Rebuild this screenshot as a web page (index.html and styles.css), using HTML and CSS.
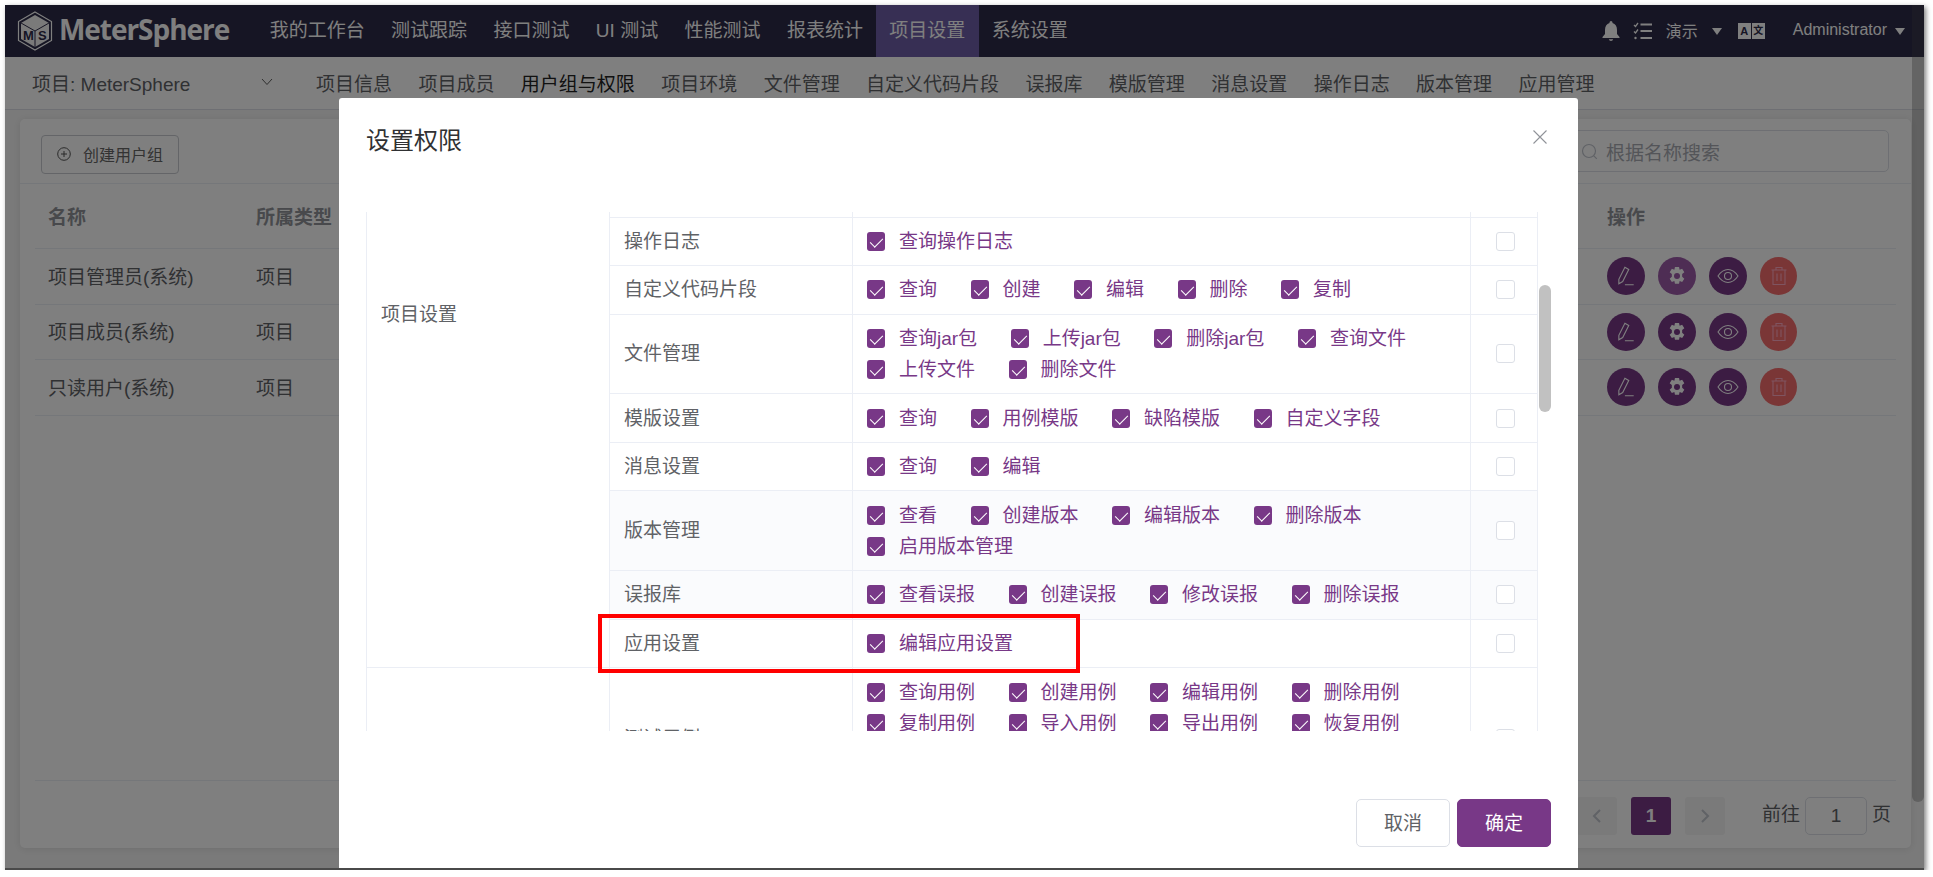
FILE: index.html
```html
<!DOCTYPE html>
<html lang="zh-CN">
<head>
  <meta charset="UTF-8">
  <title>MeterSphere 设置权限</title>
  <link rel="stylesheet" href="styles.css">
</head>
<body>

<div class="window">
  <header class="topbar">
    <div class="logo">
      <svg class="logo-mark" width="36" height="40" viewBox="0 0 36 40">
        <path d="M18 1 34.5 10.5V29.5L18 39 1.500 29.500V10.500Z" fill="none" stroke="#fff" stroke-width="1.200"/>
        <path d="M18 4 32 12V28L18 36 4 28V12Z" fill="#f4f4f4"/>
        <path d="M4 12 18 20 32 12M18 20V36" fill="none" stroke="#2c2a48" stroke-width="1"/>
        <text x="6" y="29" class="logo-ms">M</text>
        <text x="21" y="29" class="logo-ms">S</text>
      </svg>
      <span class="logo-name">MeterSphere</span>
    </div>
    <nav class="topnav">
      <a>我的工作台</a>
      <a>测试跟踪</a>
      <a>接口测试</a>
      <a>UI 测试</a>
      <a>性能测试</a>
      <a>报表统计</a>
      <a class="active">项目设置</a>
      <a>系统设置</a>
    </nav>
    <div class="topright">
      <svg class="bell" width="18" height="22" viewBox="0 0 18 22"><path d="M9 1a1.500 1.500 0 0 1 1.500 1.500v.6C13.500 4 15 6.500 15 10v4l2.500 3v1H.5v-1L3 14v-4c0-3.500 1.500-6 4.500-6.900v-.6A1.500 1.500 0 0 1 9 1ZM6.800 19.300h4.400A2.300 2.300 0 0 1 9 21a2.300 2.300 0 0 1-2.200-1.700Z" fill="#fff"/></svg>
      <svg class="tasks" width="20" height="20" viewBox="0 0 20 20" fill="none" stroke="#fff" stroke-width="2"><path d="M1 4 2.500 5.500 5 2" stroke-width="1.300"/><path d="M1 10.500 2.500 12 5 8.500" stroke-width="1.300"/><circle cx="2.500" cy="17" r="1.200" fill="#fff" stroke="none"/><path d="M7.500 3.500H19M7.500 10H19M7.500 17H19"/></svg>
      <span class="demo">演示</span>
      <i class="caret caret-demo"></i>
      <span class="lang"><b>A</b><b class="lang-zh">文</b></span>
      <span class="admin">Administrator</span>
      <i class="caret"></i>
    </div>
  </header>

  <div class="subbar">
    <div class="project">
      <span>项目: MeterSphere</span>
      <svg width="12" height="8" viewBox="0 0 12 8" fill="none" stroke="#5e5e5e" stroke-width="1"><path d="M1 1 6 6.500 11 1"/></svg>
    </div>
    <nav class="subnav">
      <a>项目信息</a>
      <a>项目成员</a>
      <a class="active">用户组与权限</a>
      <a>项目环境</a>
      <a>文件管理</a>
      <a>自定义代码片段</a>
      <a>误报库</a>
      <a>模版管理</a>
      <a>消息设置</a>
      <a>操作日志</a>
      <a>版本管理</a>
      <a>应用管理</a>
    </nav>
  </div>

  <main class="main">
    <section class="card">
      <div class="toolbar">
        <button class="add-btn">
          <svg width="14" height="14" viewBox="0 0 14 14" fill="none" stroke="#555" stroke-width="1"><circle cx="7" cy="7" r="6.300"/><path d="M4 7h6M7 4v6"/></svg>
          创建用户组
        </button>
        <div class="search">
          <svg width="17" height="17" viewBox="0 0 17 17" fill="none" stroke="#c0c4cc" stroke-width="1.200"><circle cx="8" cy="8" r="6.500"/><path d="m12.800 12.800 3 3"/></svg>
          <span>根据名称搜索</span>
        </div>
      </div>
      <div class="grid-table">
        <div class="grid-row grid-head"><span>名称</span><span>所属类型</span><span></span><span>操作</span></div>
        <div class="grid-row">
          <span>项目管理员(系统)</span><span>项目</span><span></span>
          <div class="actions">
            <button class="round"><svg width="22" height="22" viewBox="0 0 20 20" fill="none" stroke="#fff" stroke-width="1"><path d="M9 2 12.500 4 7 15 3.500 17 3.500 13ZM9 18H17"/></svg></button>
            <button class="round faded"><svg width="24" height="24" viewBox="0 0 20 20"><path d="M8.300 2h3.400l.5 2.300 2.100-.9 1.800 2.900-1.800 1.500v2.400l1.800 1.500-1.800 2.900-2.100-.9-.5 2.300H8.300l-.5-2.300-2.100.9-1.800-2.900 1.800-1.500V7.800L3.900 6.300l1.800-2.900 2.100.9Z" fill="#fff" transform="translate(0 .5)"/><circle cx="10" cy="10" r="2.500" fill="#9c5aa8"/></svg></button>
            <button class="round"><svg width="22" height="16" viewBox="0 0 22 16" fill="none" stroke="#fff" stroke-width="1.100"><path d="M1 8C4 3.500 7.500 1.500 11 1.500S18 3.500 21 8c-3 4.500-6.500 6.500-10 6.500S4 12.500 1 8Z"/><circle cx="11" cy="8" r="3.500"/></svg></button>
            <button class="round danger"><svg width="18" height="20" viewBox="0 0 18 20" fill="none" stroke="#ffa8c0" stroke-width="1.100"><path d="M1.500 4h15M6 4V1.500h6V4M3 4v14.500h12V4M7 7.500v7.500M11 7.500v7.500"/></svg></button>
          </div>
        </div>
        <div class="grid-row">
          <span>项目成员(系统)</span><span>项目</span><span></span>
          <div class="actions">
            <button class="round"><svg width="22" height="22" viewBox="0 0 20 20" fill="none" stroke="#fff" stroke-width="1"><path d="M9 2 12.500 4 7 15 3.500 17 3.500 13ZM9 18H17"/></svg></button>
            <button class="round"><svg width="24" height="24" viewBox="0 0 20 20"><path d="M8.300 2h3.400l.5 2.300 2.100-.9 1.800 2.900-1.800 1.500v2.400l1.800 1.500-1.800 2.900-2.100-.9-.5 2.300H8.300l-.5-2.300-2.100.9-1.800-2.900 1.800-1.500V7.800L3.900 6.300l1.800-2.900 2.100.9Z" fill="#fff" transform="translate(0 .5)"/><circle cx="10" cy="10" r="2.500" fill="#783887"/></svg></button>
            <button class="round"><svg width="22" height="16" viewBox="0 0 22 16" fill="none" stroke="#fff" stroke-width="1.100"><path d="M1 8C4 3.500 7.500 1.500 11 1.500S18 3.500 21 8c-3 4.500-6.500 6.500-10 6.500S4 12.500 1 8Z"/><circle cx="11" cy="8" r="3.500"/></svg></button>
            <button class="round danger"><svg width="18" height="20" viewBox="0 0 18 20" fill="none" stroke="#ffa8c0" stroke-width="1.100"><path d="M1.500 4h15M6 4V1.500h6V4M3 4v14.500h12V4M7 7.500v7.500M11 7.500v7.500"/></svg></button>
          </div>
        </div>
        <div class="grid-row">
          <span>只读用户(系统)</span><span>项目</span><span></span>
          <div class="actions">
            <button class="round"><svg width="22" height="22" viewBox="0 0 20 20" fill="none" stroke="#fff" stroke-width="1"><path d="M9 2 12.500 4 7 15 3.500 17 3.500 13ZM9 18H17"/></svg></button>
            <button class="round"><svg width="24" height="24" viewBox="0 0 20 20"><path d="M8.300 2h3.400l.5 2.300 2.100-.9 1.800 2.900-1.800 1.500v2.400l1.800 1.500-1.800 2.900-2.100-.9-.5 2.300H8.300l-.5-2.300-2.100.9-1.800-2.900 1.800-1.500V7.800L3.900 6.300l1.800-2.900 2.100.9Z" fill="#fff" transform="translate(0 .5)"/><circle cx="10" cy="10" r="2.500" fill="#783887"/></svg></button>
            <button class="round"><svg width="22" height="16" viewBox="0 0 22 16" fill="none" stroke="#fff" stroke-width="1.100"><path d="M1 8C4 3.500 7.500 1.500 11 1.500S18 3.500 21 8c-3 4.500-6.500 6.500-10 6.500S4 12.500 1 8Z"/><circle cx="11" cy="8" r="3.500"/></svg></button>
            <button class="round danger"><svg width="18" height="20" viewBox="0 0 18 20" fill="none" stroke="#ffa8c0" stroke-width="1.100"><path d="M1.500 4h15M6 4V1.500h6V4M3 4v14.500h12V4M7 7.500v7.500M11 7.500v7.500"/></svg></button>
          </div>
        </div>
      </div>
      <div class="pager">
        <span class="page-btn"><svg width="10" height="16" viewBox="0 0 10 16" fill="none" stroke="#c0c4cc" stroke-width="2"><path d="M8 2 2 8l6 6"/></svg></span>
        <span class="page-btn page-on">1</span>
        <span class="page-btn"><svg width="10" height="16" viewBox="0 0 10 16" fill="none" stroke="#c0c4cc" stroke-width="2"><path d="m2 2 6 6-6 6"/></svg></span>
        <span class="goto">前往</span>
        <span class="goto-input">1</span>
        <span>页</span>
      </div>
    </section>
  </main>

  <div class="overlay"></div>
  <div class="window-thumb"></div>

  <div class="dialog">
    <div class="dialog-head">
      <h2>设置权限</h2>
      <svg class="close" width="14" height="14" viewBox="0 0 14 14" fill="none" stroke="#909399" stroke-width="1.100"><path d="M.5.5l13 13M13.500.5l-13 13"/></svg>
    </div>
    <div class="perm-scroll">
      <table class="perm">
        <colgroup><col class="c1"><col class="c2"><col class="c3"><col class="c4"></colgroup>
        <tr class="sliver">
          <td class="group" rowspan="9">项目设置</td><td></td><td></td><td></td>
        </tr>
        <tr>
          <td>操作日志</td>
          <td><div class="checks"><label><i class="cb"></i>查询操作日志</label></div></td>
          <td><i class="cb off"></i></td>
        </tr>
        <tr>
          <td>自定义代码片段</td>
          <td><div class="checks"><label><i class="cb"></i>查询</label><label><i class="cb"></i>创建</label><label><i class="cb"></i>编辑</label><label><i class="cb"></i>删除</label><label><i class="cb"></i>复制</label></div></td>
          <td><i class="cb off"></i></td>
        </tr>
        <tr>
          <td>文件管理</td>
          <td><div class="checks"><label><i class="cb"></i>查询jar包</label><label><i class="cb"></i>上传jar包</label><label><i class="cb"></i>删除jar包</label><label><i class="cb"></i>查询文件</label><label><i class="cb"></i>上传文件</label><label><i class="cb"></i>删除文件</label></div></td>
          <td><i class="cb off"></i></td>
        </tr>
        <tr>
          <td>模版设置</td>
          <td><div class="checks"><label><i class="cb"></i>查询</label><label><i class="cb"></i>用例模版</label><label><i class="cb"></i>缺陷模版</label><label><i class="cb"></i>自定义字段</label></div></td>
          <td><i class="cb off"></i></td>
        </tr>
        <tr>
          <td>消息设置</td>
          <td><div class="checks"><label><i class="cb"></i>查询</label><label><i class="cb"></i>编辑</label></div></td>
          <td><i class="cb off"></i></td>
        </tr>
        <tr class="shade">
          <td>版本管理</td>
          <td><div class="checks"><label><i class="cb"></i>查看</label><label><i class="cb"></i>创建版本</label><label><i class="cb"></i>编辑版本</label><label><i class="cb"></i>删除版本</label><label><i class="cb"></i>启用版本管理</label></div></td>
          <td><i class="cb off"></i></td>
        </tr>
        <tr class="shade">
          <td>误报库</td>
          <td><div class="checks"><label><i class="cb"></i>查看误报</label><label><i class="cb"></i>创建误报</label><label><i class="cb"></i>修改误报</label><label><i class="cb"></i>删除误报</label></div></td>
          <td><i class="cb off"></i></td>
        </tr>
        <tr>
          <td>应用设置</td>
          <td><div class="checks"><label><i class="cb"></i>编辑应用设置</label></div></td>
          <td><i class="cb off"></i></td>
        </tr>
        <tr class="tall">
          <td></td>
          <td>测试用例</td>
          <td class="top"><div class="checks"><label><i class="cb"></i>查询用例</label><label><i class="cb"></i>创建用例</label><label><i class="cb"></i>编辑用例</label><label><i class="cb"></i>删除用例</label><label><i class="cb"></i>复制用例</label><label><i class="cb"></i>导入用例</label><label><i class="cb"></i>导出用例</label><label><i class="cb"></i>恢复用例</label></div></td>
          <td><i class="cb off"></i></td>
        </tr>
      </table>
      <div class="perm-thumb"></div>
    </div>
    <div class="dialog-foot">
      <button class="btn">取消</button>
      <button class="btn btn-primary">确定</button>
    </div>
  </div>

  <div class="redbox"></div>
</div>

</body>
</html>
```

FILE: styles.css
```css
* { box-sizing: border-box; }
body { margin: 0; background: #fff; font-family: "Liberation Sans", "Noto Sans CJK SC", sans-serif; font-size: 19px; color: #606266; }
.window { position: relative; margin: 5px 0 0 5px; width: 1919px; height: 865px; border-bottom: 2px solid #4a4a4a; overflow: hidden; display: flex; flex-direction: column; background: #f5f5f5; box-shadow: 2px 2px 5px rgba(0,0,0,.5); }

/* top bar */
.topbar { height: 52px; flex: none; display: flex; align-items: center; background: #2c2a48; color: #fff; }
.logo { width: 251.500px; display: flex; align-items: center; padding-left: 12px; }
.logo-mark { flex: none; }
.logo-ms { font: bold 13px "Liberation Sans", sans-serif; fill: #2c2a48; }
.logo-name { margin-left: 6px; padding-bottom: 4px; font: bold 28px "Open Sans", sans-serif; letter-spacing: -1.050px; line-height: 40px; }
.topnav { display: flex; height: 100%; }
.topnav a { display: flex; align-items: center; padding: 0 13.200px 5px; }
.topnav a.active { background: #6f5fa8; }
.topright { margin-left: auto; display: flex; align-items: center; padding-right: 19px; font-size: 16px; }
.bell { margin-right: 13px; }
.tasks { margin-right: 13px; }
.demo { font-size: 16px; padding-bottom: 3px; }
.admin { padding-bottom: 2px; }
.caret { width: 0; height: 0; border-left: 5px solid transparent; border-right: 5px solid transparent; border-top: 7px solid #fff; margin-left: 8px; }
.caret-demo { margin-left: 14px; }
.lang { display: flex; gap: 1px; margin: 0 28px 0 16px; }
.lang b { width: 13px; height: 16px; background: #fff; color: #2c2a48; font-size: 11px; line-height: 16px; text-align: center; }
.lang .lang-zh { font-size: 10px; }

/* second bar */
.subbar { height: 53px; flex: none; display: flex; align-items: center; padding-bottom: 2px; background: #fff; border-bottom: 1px solid #dcdfe6; }
.project { width: 298px; display: flex; align-items: center; justify-content: space-between; padding: 0 30px 0 27px; color: #606266; }
.subnav { display: flex; gap: 26.400px; padding-left: 13px; }
.subnav a.active { color: #222; }

/* page card */
.main { flex: 1; padding: 9px 13px 20px 15px; min-height: 0; display: flex; }
.card { flex: 1; display: flex; flex-direction: column; background: #fff; border-radius: 5px; box-shadow: 0 1px 8px rgba(0,0,0,.1); }
.toolbar { height: 65px; flex: none; display: flex; align-items: center; justify-content: space-between; padding: 0 22px 0 21px; border-bottom: 1px solid #ebeef5; }
.add-btn { width: 138px; height: 39px; margin-top: 6px; display: flex; align-items: center; justify-content: center; gap: 12px; background: #fff; border: 1px solid #c8cad0; border-radius: 4px; color: #666; font: 16px "Liberation Sans", "Noto Sans CJK SC", sans-serif; }
.search { width: 320px; height: 42px; display: flex; align-items: center; gap: 8px; padding-left: 11px; border: 1px solid #dcdfe6; border-radius: 5px; color: #a8abb2; }
.grid-table { margin: 0 15px; }
.grid-row { display: grid; grid-template-columns: 208px 200px 1fr 302px; align-items: center; height: 55.500px; border-bottom: 1px solid #ebeef5; }
.grid-row > span { padding: 0 0 2px 13px; }
.grid-head { height: 65px; font-weight: bold; color: #909399; }
.actions { padding-left: 13px; display: flex; gap: 13px; }
.round { width: 38px; height: 38px; padding: 0; display: flex; align-items: center; justify-content: center; border: 0; border-radius: 50%; background: #783887; }
.round.faded { background: #9c5aa8; }
.round.danger { width: 37px; background: #f56c6c; }
.pager { margin: auto 15px 0; height: 68px; padding: 16px 5px 0 0; display: flex; justify-content: flex-end; align-items: flex-start; border-top: 1px solid #ebeef5; color: #606266; }
.page-btn { width: 40px; height: 38px; margin-left: 14px; display: flex; align-items: center; justify-content: center; background: #f4f4f5; border-radius: 3px; font-weight: bold; }
.page-on { background: #783887; color: #fff; }
.goto { margin-left: 37px; line-height: 36px; }
.goto-input { width: 62px; height: 38px; margin: 0 5px; border: 1px solid #dcdfe6; border-radius: 5px; text-align: center; line-height: 36px; }
.pager > span:last-child { line-height: 36px; }

.overlay { position: absolute; inset: 0; background: rgba(0,0,0,.5); }
.window-thumb { position: absolute; top: 0; right: 0; width: 12px; height: 797px; border-radius: 0 0 6px 6px; background: rgba(41,41,41,.3); }

/* dialog */
.dialog { position: absolute; left: 334px; top: 93px; width: 1239px; height: 790px; background: #fff; border-radius: 3px; }
.dialog-head { height: 114px; display: flex; justify-content: space-between; align-items: flex-start; padding: 25px 31px 0 27px; }
.dialog-head h2 { margin: 0; font-size: 24px; font-weight: normal; line-height: 36px; color: #303133; }
.close { margin-top: 7px; }
.perm-scroll { position: relative; height: 519px; margin-left: 27px; overflow: hidden; }
.perm { width: 1171px; table-layout: fixed; border-collapse: collapse; }
.c1 { width: 243px; }
.c2 { width: 243px; }
.c3 { width: 618px; }
.c4 { width: 67px; }
.perm td { border: 1px solid #ebeef5; padding: 8.300px 14px; line-height: 31px; vertical-align: middle; }
.perm td:last-child { padding: 0 0 0 25px; }
.perm .sliver td { height: 5px; padding: 0; line-height: 0; border-top: 0; }
.perm .sliver td.group { padding: 87px 14px 0; vertical-align: top; line-height: 31px; }
.perm .shade td:not(.group) { background: #fafbfd; }
.perm .tall { height: 141px; }
.perm td.top { vertical-align: top; }
.checks { display: flex; flex-wrap: wrap; color: #783887; }
.checks label { display: flex; align-items: center; gap: 14px; margin-right: 33.500px; height: 31px; }
.cb { position: relative; display: block; flex: none; width: 18px; height: 19px; background: #783887; border-radius: 3px; }
.cb::after { content: ""; position: absolute; left: 6px; top: 3px; width: 6px; height: 11px; border: solid #fff; border-width: 0 1.200px 1.200px 0; transform: rotate(45deg); }
.cb.off { width: 19px; background: #fff; border: 1px solid #dcdfe6; }
.cb.off::after { display: none; }
.perm-thumb { position: absolute; left: 1173px; top: 73px; width: 12px; height: 127px; border-radius: 6px; background: #c1c1c1; }
.dialog-foot { margin-top: 68px; display: flex; justify-content: flex-end; gap: 7px; padding-right: 27px; }
.btn { width: 94px; height: 48px; padding: 0 0 4px; background: #fff; border: 1px solid #dcdfe6; border-radius: 5px; color: #606266; font: 19px "Liberation Sans", "Noto Sans CJK SC", sans-serif; }
.btn-primary { background: #783887; border-color: #783887; color: #fff; }

.redbox { position: absolute; left: 593px; top: 609px; width: 482px; height: 59px; border: 4px solid #f00; }
```
